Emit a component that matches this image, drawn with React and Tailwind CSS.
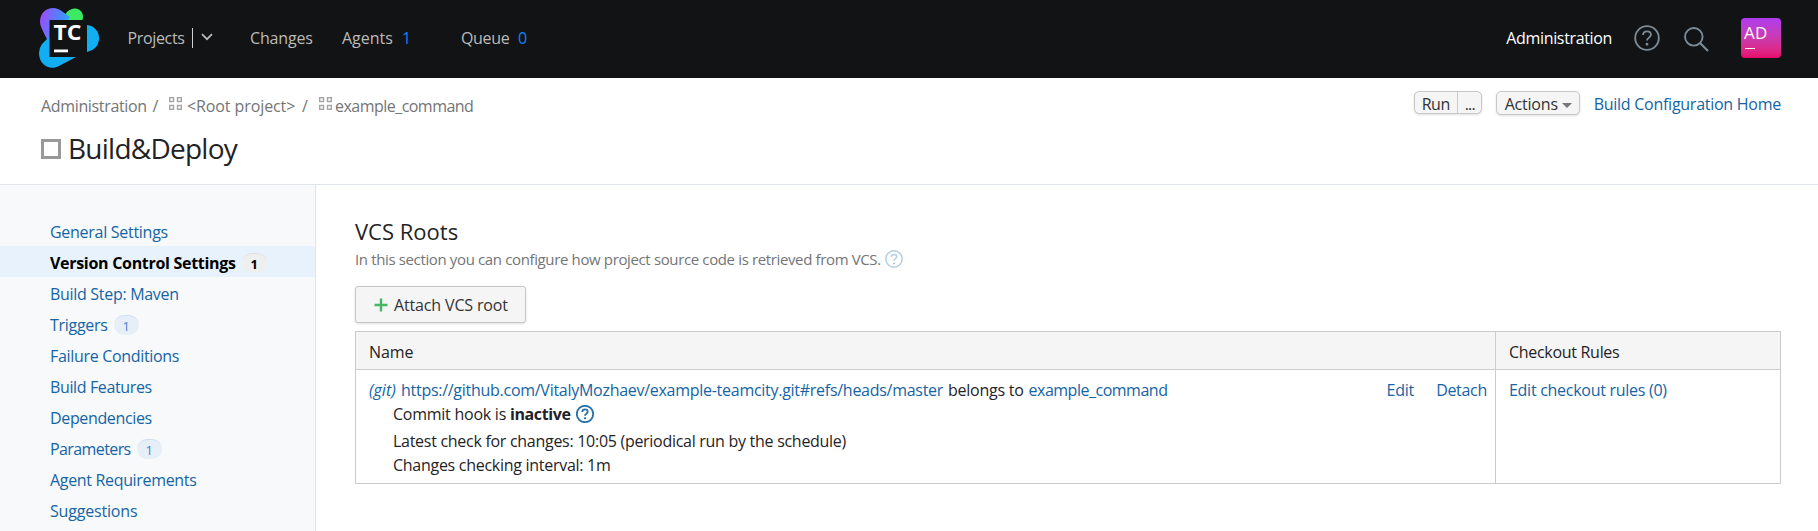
const SIDEBAR = [
  { label: "General Settings", track: "tracking-[-0.28px]" },
  { label: "Version Control Settings", track: "tracking-[-0.3px]", count: 1, active: true },
  { label: "Build Step: Maven", track: "tracking-[-0.3px]" },
  { label: "Triggers", track: "tracking-[-0.28px]", count: 1 },
  { label: "Failure Conditions", track: "tracking-[-0.32px]" },
  { label: "Build Features", track: "tracking-[-0.37px]" },
  { label: "Dependencies", track: "tracking-[-0.35px]" },
  { label: "Parameters", track: "tracking-[-0.6px]", count: 1 },
  { label: "Agent Requirements", track: "tracking-[-0.33px]" },
  { label: "Suggestions", track: "tracking-[-0.18px]" },
];

function Logo() {
  return (
    <svg className="ml-[38px] h-[62px] w-[62px] shrink-0" viewBox="0 0 62 62">
      <defs>
        <linearGradient id="violet" x1="0" y1="0.3" x2="1" y2="0.6">
          <stop offset="0" stopColor="#9a4dfc" />
          <stop offset="0.55" stopColor="#5580fa" />
          <stop offset="1" stopColor="#21b1f0" />
        </linearGradient>
        <linearGradient id="green" x1="1" y1="0" x2="0" y2="1">
          <stop offset="0.4" stopColor="#3bea62" />
          <stop offset="1" stopColor="#25c5b8" />
        </linearGradient>
      </defs>
      <path d="M22 13 L29 4 Q33 0 38 0.5 Q45 2 45 9 Q45 12 43 15 L38 24 H18z" fill="url(#green)" />
      <path d="M2 14 C2 5 8 0 15 0 Q20 0 25 4 L32 9 L16 34 L10 33 Q7 28 3.500 20 Q2 17 2 14z" fill="url(#violet)" />
      <path d="M10 30 L30 40 L38 49 L21 58 C12 63 1 57 1 45 Q1 40 4 36z" fill="#11aef2" />
      <path d="M49 17 C57 18 61 24 61 30 C61 37 57 42 49 44z" fill="#11aef2" />
      <rect x="11.500" y="12" width="36.500" height="37" fill="#121314" />
      <text x="15.500" y="32" fill="#fff" fontFamily="Open Sans, sans-serif" fontWeight="700" fontSize="21" textLength="28" lengthAdjust="spacingAndGlyphs">TC</text>
      <rect x="16" y="41.500" width="14" height="2.800" fill="#fff" />
    </svg>
  );
}

function HelpIcon({ className, width = 1.7 }) {
  return (
    <svg className={className} viewBox="0 0 24 24" fill="none" stroke="currentColor" strokeWidth={width}>
      <circle cx="12" cy="12" r="10.900" />
      <path d="M8.400 9.300 C8.400 7 10 5.900 12 5.900 S15.600 7.100 15.600 9 C15.600 11.600 12 11.700 12 14.300" />
      <path d="M12 16.500v2.400" strokeWidth={width + 0.6} />
    </svg>
  );
}

function ProjectIcon({ className }) {
  return (
    <svg className={className} viewBox="0 0 13 13" fill="none" stroke="#a4a4a4" strokeWidth="1.400">
      <rect x="0.700" y="0.700" width="3.800" height="3.800" />
      <rect x="8.500" y="0.700" width="3.800" height="3.800" />
      <rect x="0.700" y="8.500" width="3.800" height="3.800" />
      <rect x="8.500" y="8.500" width="3.800" height="3.800" />
    </svg>
  );
}

function Header() {
  return (
    <header className="flex h-[78px] items-center bg-[#121314] text-[#bbbbbb]">
      <Logo />
      <nav className="flex h-full items-center pb-[2px]">
        <div className="flex w-[122px] items-center pl-[27.500px]">
          <span className="w-[58px] tracking-[-0.34px]">Projects</span>
          <span className="ml-[6px] h-5 w-px shrink-0 bg-[#d0d0d0]" />
          <svg className="ml-[8px] mt-[-3px] h-[8px] w-[12px] shrink-0" viewBox="0 0 12 8" fill="none" stroke="currentColor" strokeWidth="1.700">
            <path d="M1 1.200l5 5 5-5" />
          </svg>
        </div>
        <span className="ml-[28px] w-[92px] tracking-[-0.16px]">Changes</span>
        <span className="w-[60px]">Agents</span>
        <span className="w-[59px] text-[#0e84f5]">1</span>
        <span className="w-[57px] tracking-[-0.35px]">Queue</span>
        <span className="text-[#0e84f5]">0</span>
      </nav>
      <div className="ml-auto flex items-center pr-[37px]">
        <span className="mb-[2px] mr-[22px] tracking-[-0.35px] text-white">Administration</span>
        <HelpIcon className="mb-[2px] mr-[24px] size-[26px] text-[#7b8c99]" />
        <svg className="mr-[32px] size-[25px] text-[#7b8c99]" viewBox="0 0 25 25" fill="none" stroke="currentColor" strokeWidth="1.900">
          <circle cx="9.800" cy="9.800" r="8.800" />
          <path d="M16 16l8 8" strokeWidth="2.200" />
        </svg>
        <div className="mb-[2px] flex size-10 flex-col rounded-[4px] bg-linear-to-b from-[#af3bee] to-[#e8046c] pl-[3px] pt-[5px] text-white">
          <span className="text-[17px] leading-[20px] tracking-[0.3px]">AD</span>
          <span className="ml-px mt-[5px] h-px w-[10px] bg-white" />
        </div>
      </div>
    </header>
  );
}

function TitleBar() {
  return (
    <section className="flex h-[107px] justify-between border-b border-[#dfe5eb] pl-[41px] pr-[37px]">
      <div className="flex flex-col">
        <div className="mt-[16px] flex h-[24px] items-center text-[#737577]">
          <span className="w-[111.500px] tracking-[-0.34px]">Administration</span>
          <span className="w-[16.500px]">/</span>
          <ProjectIcon className="mt-[-5px] size-[13px]" />
          <span className="ml-[5px] w-[115px] tracking-[-0.1px]">&lt;Root project&gt;</span>
          <span className="w-[17px]">/</span>
          <ProjectIcon className="mt-[-5px] size-[13px]" />
          <span className="ml-[3px] tracking-[-0.53px]">example_command</span>
        </div>
        <div className="mt-[11px] flex h-[38px] items-center">
          <span className="mt-px size-[20px] border-[3px] border-[#999999]" />
          <h1 className="ml-[7px] text-[28px] leading-[38px] tracking-[-0.75px]">Build&amp;Deploy</h1>
        </div>
      </div>
      <div className="mt-[13px] flex h-6 items-start">
        <div className="flex h-[23px] w-[68px] rounded-[5px] border border-[#c8c8c8] bg-[#f5f5f5] leading-[25px] text-[#333] shadow-sm">
          <span className="w-[43px] border-r border-[#c8c8c8] pl-[7px] tracking-[-0.4px]">Run</span>
          <span className="pl-[7px] tracking-[-0.8px]">...</span>
        </div>
        <div className="ml-[14px] flex h-[24px] w-[84px] items-center rounded-[5px] border border-[#c8c8c8] bg-[#f5f5f5] pl-[8px] pt-[2px] text-[#333] shadow-sm">
          <span className="w-[57px] tracking-[-0.2px]">Actions</span>
          <svg className="mt-[2px] h-[5px] w-[10px]" viewBox="0 0 10 5"><path d="M0 0h10l-5 5z" fill="#777" /></svg>
        </div>
        <a className="ml-[14px] whitespace-nowrap leading-[26px] tracking-[-0.26px] text-[#1564a5]">Build Configuration Home</a>
      </div>
    </section>
  );
}

function Sidebar() {
  return (
    <aside className="w-[316px] shrink-0 border-r border-[#dfe5eb] bg-[#f7f9fa] pt-[30px]">
      {SIDEBAR.map((item) => (
        <div
          key={item.label}
          className={"flex h-[31px] items-center pl-[50px] " + (item.active ? "bg-[#e7f2fd] font-bold text-black" : "text-[#1564a5]")}
        >
          <span className={"pt-[2px] " + item.track}>{item.label}</span>
          {item.count && (
            <span
              className={
                "mt-[3px] flex h-[20px] w-[25px] items-center justify-center rounded-full border-t text-[13px] " +
                (item.active ? "ml-[6px] border-[#dfdfdf] bg-[#efefef]" : "ml-[6px] border-[#cfe0f2] bg-[#e6eef8] text-[#4a80cf]")
              }
            >
              {item.count}
            </span>
          )}
        </div>
      ))}
    </aside>
  );
}

function VcsRoots() {
  return (
    <main className="min-w-0 flex-1 pl-[39px] pr-[37px] pt-[30px]">
      <h2 className="text-[22px] leading-[32px]">VCS Roots</h2>
      <div className="mt-[1px] flex h-[22px] items-center text-[15px] text-[#737577]">
        <span className="whitespace-nowrap tracking-[-0.365px]">
          In this section you can configure how project source code is retrieved from VCS.
        </span>
        <HelpIcon className="ml-[4px] mt-[-1px] size-[18px] text-[#b3cde3]" width={2} />
      </div>
      <button className="mt-[16px] flex h-[37px] w-[171px] items-center rounded-[3px] border border-[#c6c6c6] bg-[#f5f5f5] pl-[18px] text-[#333] shadow-sm">
        <svg className="size-[14px]" viewBox="0 0 14 14" stroke="#45b866" strokeWidth="2.400"><path d="M7 0.500v13M0.500 7h13" /></svg>
        <span className="ml-[6px] pt-px tracking-[-0.15px]">Attach VCS root</span>
      </button>
      <div className="mt-[8px] grid h-[153px] grid-cols-[1fr_285px] grid-rows-[38px_1fr] border border-[#cccccc]">
        <div className="border-b border-[#cccccc] bg-[#f5f5f5] pl-[13px] pt-[3px] leading-[34px] tracking-[-0.1px]">Name</div>
        <div className="border-b border-l border-[#cccccc] bg-[#f5f5f5] pl-[13px] pt-[3px] leading-[34px] tracking-[-0.3px]">Checkout Rules</div>
        <div className="flex justify-between pl-[13px] pr-[8px] pt-[8px]">
          <div>
            <div className="flex h-[24px] items-center whitespace-nowrap">
              <a className="w-[32px] italic text-[#1564a5]">(git)</a>
              <a className="w-[547px] tracking-[-0.275px] text-[#1564a5]">https://github.com/VitalyMozhaev/example-teamcity.git#refs/heads/master</a>
              <span className="w-[80.500px] tracking-[-0.25px]">belongs to</span>
              <a className="tracking-[-0.49px] text-[#1564a5]">example_command</a>
            </div>
            <div className="flex h-[24px] items-center pl-[24px]">
              <span className="w-[117px] tracking-[-0.25px]">Commit hook is</span>
              <b className="w-[66px] tracking-[-0.4px]">inactive</b>
              <HelpIcon className="size-[18px] text-[#2a70ab]" width={2.4} />
            </div>
            <div className="mt-[3px] flex h-[24px] items-center whitespace-nowrap pl-[24px] tracking-[-0.285px]">
              Latest check for changes: 10:05 (periodical run by the schedule)
            </div>
            <div className="flex h-[24px] items-center pl-[24px] tracking-[-0.28px]">Changes checking interval: 1m</div>
          </div>
          <div className="flex h-[24px] items-center gap-[22px] text-[#1564a5]">
            <a className="tracking-[-0.2px]">Edit</a>
            <a className="tracking-[-0.3px]">Detach</a>
          </div>
        </div>
        <div className="border-l border-[#cccccc] pl-[13px] pt-[8px]">
          <a className="flex h-[24px] items-center tracking-[-0.28px] text-[#1564a5]">Edit checkout rules (0)</a>
        </div>
      </div>
    </main>
  );
}

export default function App() {
  return (
    <div className="flex h-[531px] w-full flex-col overflow-hidden bg-white font-['Open_Sans','Noto_Sans',sans-serif] text-[16px] leading-[24px] text-[#1f2326]">
      <Header />
      <TitleBar />
      <div className="flex min-h-0 flex-1">
        <Sidebar />
        <VcsRoots />
      </div>
    </div>
  );
}
